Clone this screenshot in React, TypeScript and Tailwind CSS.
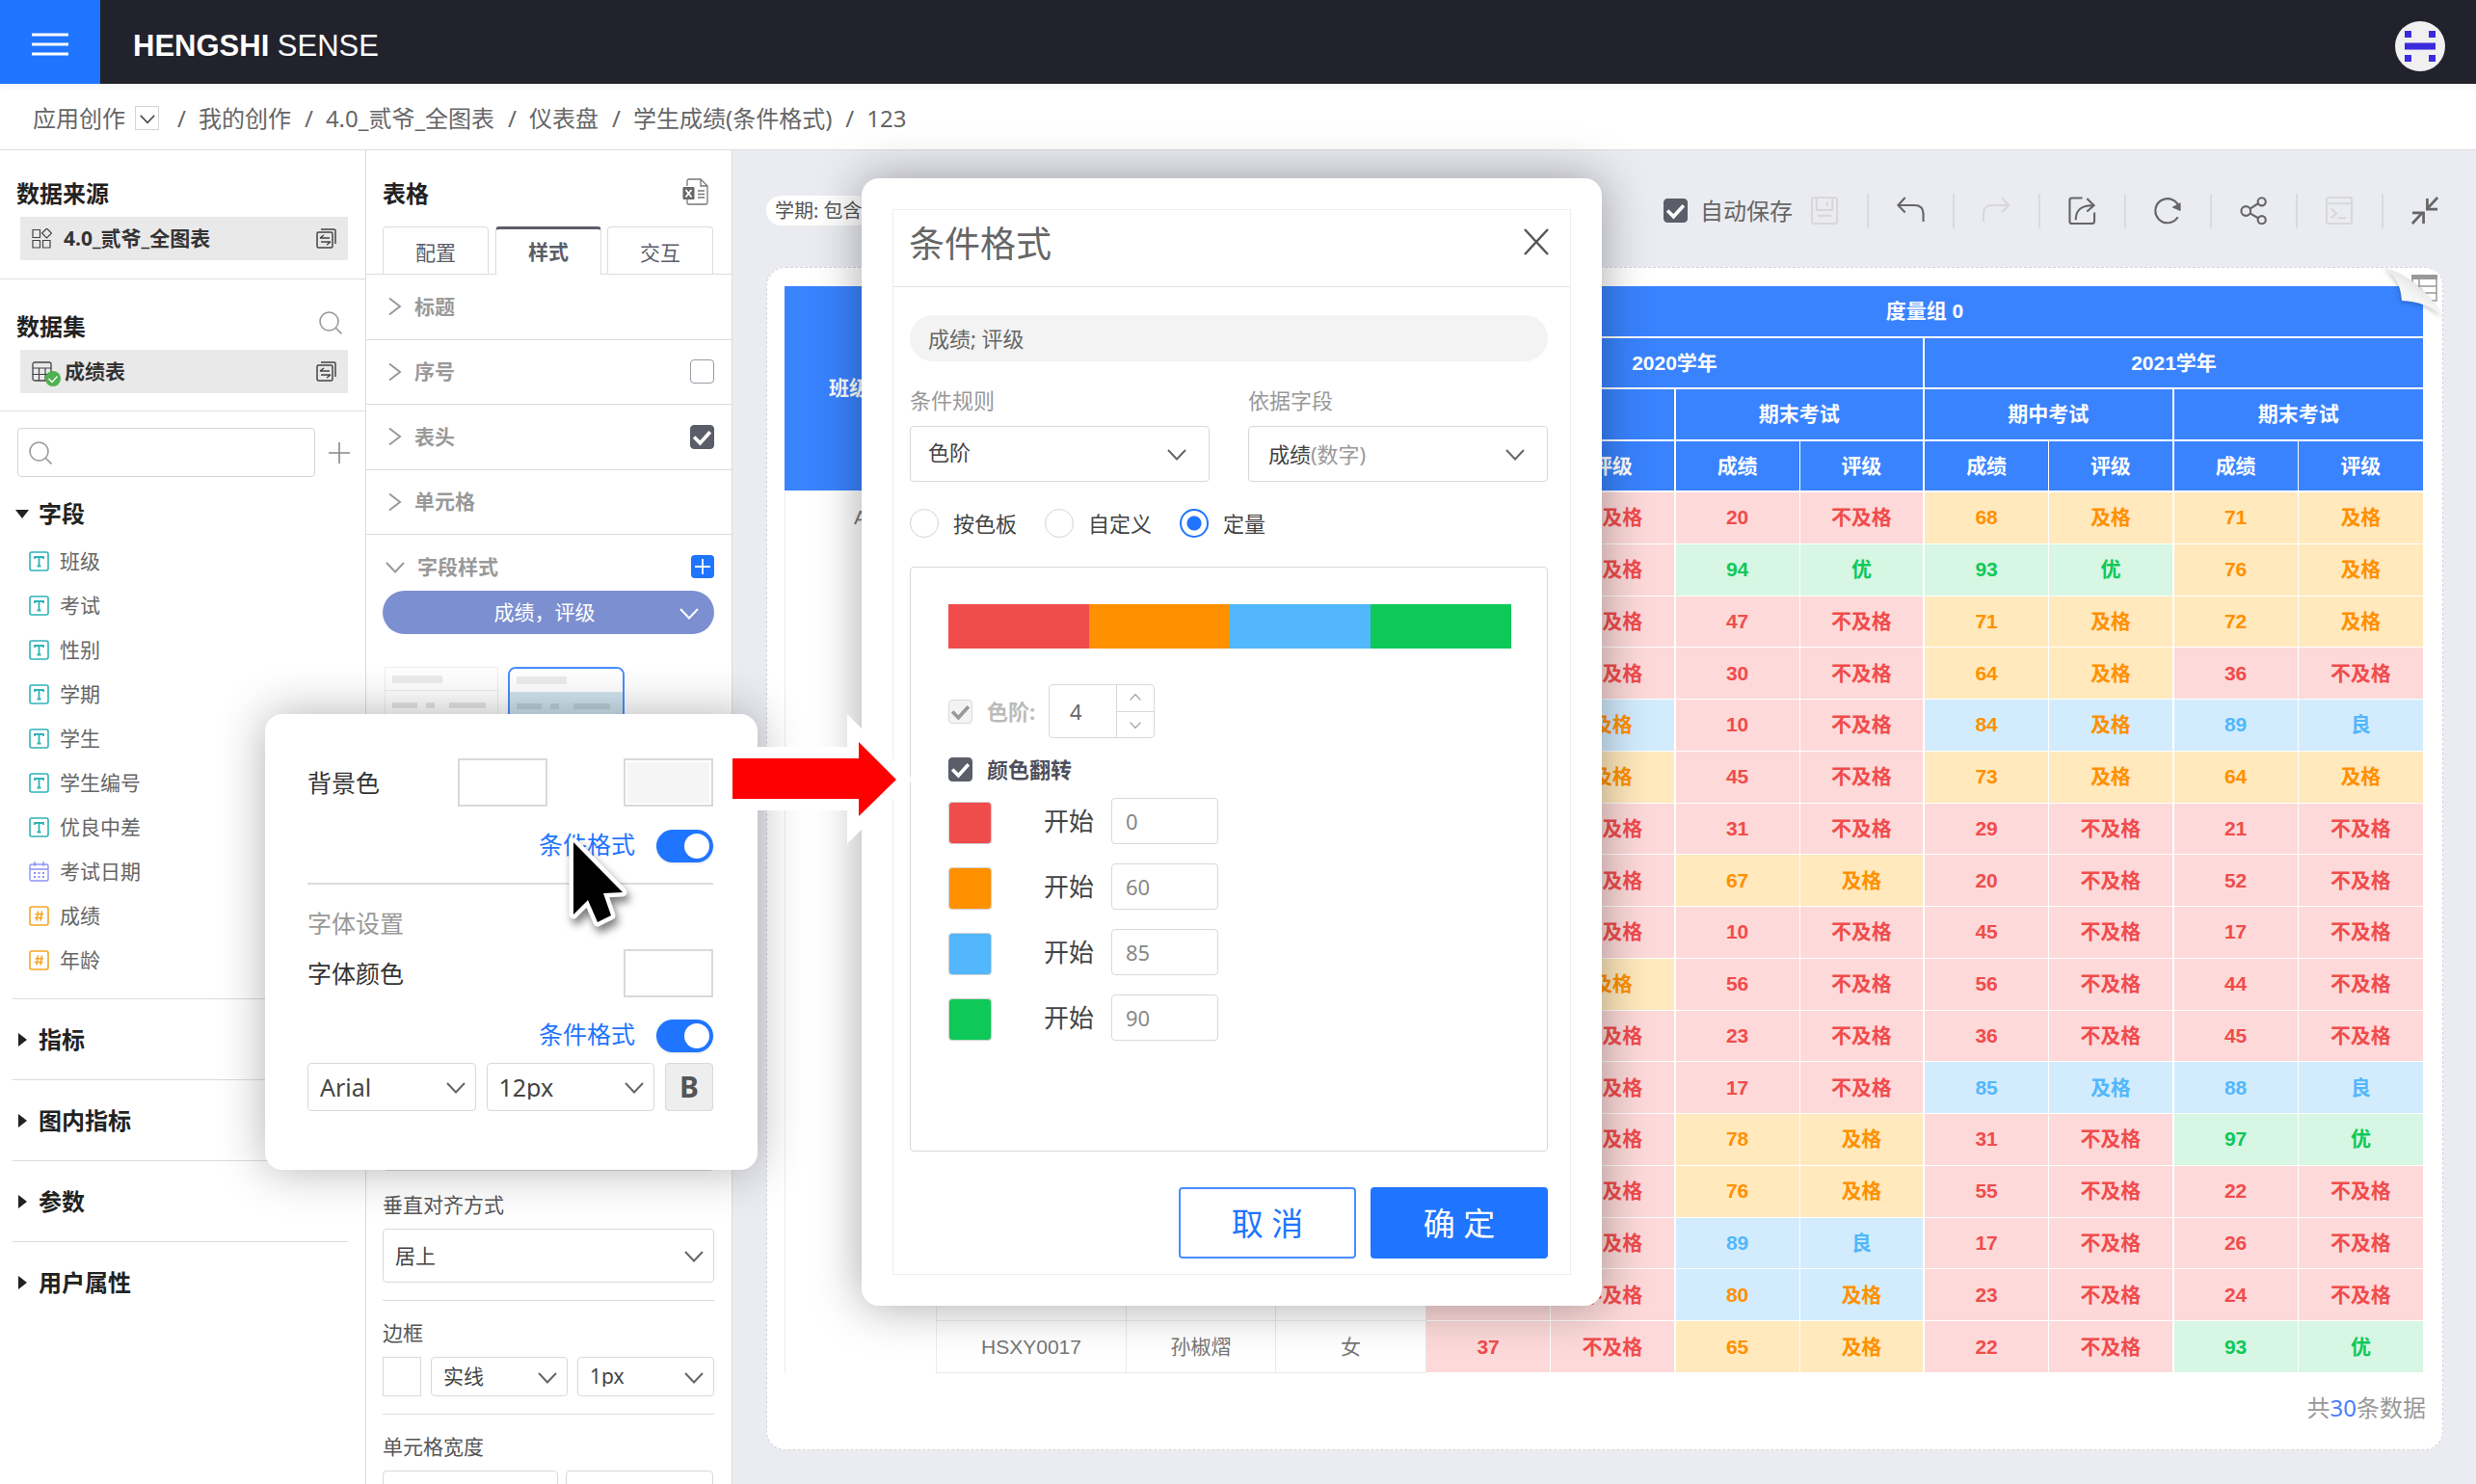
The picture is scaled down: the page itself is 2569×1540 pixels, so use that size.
import React, { useState } from 'react';

type Rule = { color: string; start: string };

const breadcrumbs = ['我的创作', '4.0_贰爷_全图表', '仪表盘', '学生成绩(条件格式)', '123'];

const fields: { name: string; kind: 'text' | 'date' | 'number' }[] = [
  { name: '班级', kind: 'text' },
  { name: '考试', kind: 'text' },
  { name: '性别', kind: 'text' },
  { name: '学期', kind: 'text' },
  { name: '学生', kind: 'text' },
  { name: '学生编号', kind: 'text' },
  { name: '优良中差', kind: 'text' },
  { name: '考试日期', kind: 'date' },
  { name: '成绩', kind: 'number' },
  { name: '年龄', kind: 'number' },
];

const groups = ['指标', '图内指标', '参数', '用户属性'];

const styleSections: { name: string; checked?: boolean }[] = [
  { name: '标题' },
  { name: '序号', checked: false },
  { name: '表头', checked: true },
  { name: '单元格' },
];

// 每行四次考试的成绩：2020 期中、2020 期末、2021 期中、2021 期末
const scores = [
  [35, 20, 68, 71],
  [42, 94, 93, 76],
  [18, 47, 71, 72],
  [51, 30, 64, 36],
  [82, 10, 84, 89],
  [66, 45, 73, 64],
  [27, 31, 29, 21],
  [39, 67, 20, 52],
  [44, 10, 45, 17],
  [70, 56, 56, 44],
  [12, 23, 36, 45],
  [33, 17, 85, 88],
  [25, 78, 31, 97],
  [48, 76, 55, 22],
  [19, 89, 17, 26],
  [53, 80, 23, 24],
  [37, 65, 22, 93],
];

const rules: Rule[] = [
  { color: 'bg-[#f04c4c]', start: '0' },
  { color: 'bg-[#ff9000]', start: '60' },
  { color: 'bg-[#52b7fc]', start: '85' },
  { color: 'bg-[#0ec958]', start: '90' },
];

const cellBg = (score: number) => {
  if (score >= 90) return 'bg-[#d7f6e3]';
  if (score >= 80) return 'bg-[#d2ecfe]';
  if (score >= 60) return 'bg-[#ffe9bd]';
  return 'bg-[#fdd9d9]';
};

const cellText = (score: number) => {
  if (score >= 90) return 'text-[#0ec958]';
  if (score >= 85) return 'text-[#52b7fc]';
  if (score >= 60) return 'text-[#ff9000]';
  return 'text-[#f04c4c]';
};

const grade = (score: number) => {
  if (score >= 90) return '优';
  if (score > 85) return '良';
  if (score >= 60) return '及格';
  return '不及格';
};

const Chevron: React.FC<{ className?: string; dir?: 'down' | 'right' }> = ({ className = '', dir = 'down' }) => (
  <svg viewBox="0 0 20 20" fill="none" stroke="currentColor" strokeWidth={2} className={className} aria-hidden="true">
    <path d={dir === 'down' ? 'M1 6 10 15.500 19 6' : 'M4 1.500 15 10 4 18.500'} />
  </svg>
);

const SearchIcon: React.FC = () => (
  <svg viewBox="0 0 24 24" fill="none" stroke="#999" strokeWidth={1.6} className="h-6 w-6" aria-hidden="true">
    <circle cx="10.5" cy="10.5" r="9.5" />
    <path d="m17.5 17.5 6 6" />
  </svg>
);

const SwapIcon: React.FC = () => (
  <svg viewBox="0 0 21 21" fill="none" stroke="#444" strokeWidth={1.5} className="h-[21px] w-[21px]" aria-hidden="true">
    <rect x="1" y="4" width="16" height="16" rx="1.5" />
    <path d="M5 1h13.5Q20 1 20 2.500V16" />
    <path d="M4 10h10M4 10l4-3M5 14h10M15 14l-4 3" />
  </svg>
);

const FieldIcon: React.FC<{ kind: string }> = ({ kind }) => {
  if (kind === 'date') {
    return (
      <svg viewBox="0 0 21 21" fill="none" stroke="#8f93f5" strokeWidth={1.4} className="h-[21px] w-[21px]" aria-hidden="true">
        <rect x="1" y="3" width="19" height="17" rx="2" />
        <path d="M1 8h19M6 0v5M15 0v5" />
        <path d="M5 12h11M5 16h11" strokeDasharray="2 2.500" strokeWidth={1.8} />
      </svg>
    );
  }
  const color = kind === 'text' ? '#2fb3b5' : '#f5a623';
  return (
    <svg viewBox="0 0 21 21" fill="none" stroke={color} strokeWidth={1.6} className="h-[21px] w-[21px]" aria-hidden="true">
      <rect x="1" y="1" width="19" height="19" rx="2" />
      {kind === 'text' ? (
        <path d="M6 8V6h9v2M10.500 6v9.500M8.500 15.500h4" strokeWidth={1.8} />
      ) : (
        <path d="M9.500 5.500l-1.500 10M13.500 5.500l-1.500 10M6.500 8.700h8.500M6 12.500h8.500" />
      )}
    </svg>
  );
};

const Checkbox: React.FC<{ id: string; label?: string; defaultChecked?: boolean; disabled?: boolean }> = ({
  id,
  label,
  defaultChecked = false,
  disabled = false,
}) => {
  const [checked, setChecked] = useState(defaultChecked);
  return (
    <span className="relative flex h-[25px] w-[25px] shrink-0">
      <input
        id={id}
        type="checkbox"
        aria-label={label}
        checked={checked}
        disabled={disabled}
        onChange={() => setChecked(!checked)}
        className="h-[25px] w-[25px] appearance-none rounded border border-[#999ba5] bg-white checked:border-[#5b5d69] checked:bg-[#5b5d69] disabled:border-[#d9d9d9] disabled:bg-[#f3f3f3]"
      />
      {checked && (
        <svg
          viewBox="0 0 24 24"
          fill="none"
          stroke={disabled ? '#999' : '#fff'}
          strokeWidth={3.5}
          className="pointer-events-none absolute inset-0 h-[25px] w-[25px]"
          aria-hidden="true"
        >
          <path d="m4 12 6 6L20 7" />
        </svg>
      )}
    </span>
  );
};

const Toggle: React.FC<{ label: string }> = ({ label }) => {
  const [on, setOn] = useState(true);
  return (
    <input
      type="checkbox"
      role="switch"
      aria-label={label}
      checked={on}
      onChange={() => setOn(!on)}
      className="relative h-[34px] w-[59px] shrink-0 appearance-none rounded-full bg-[#c4c4c4] shadow-sm before:absolute before:left-1 before:top-1 before:h-[26px] before:w-[26px] before:rounded-full before:bg-white checked:bg-[#1f75ff] checked:before:left-[29px]"
    />
  );
};

const Select: React.FC<{ id: string; label?: string; value: string; hint?: string; className?: string }> = ({
  id,
  label,
  value,
  hint,
  className = '',
}) => (
  <div className={`relative flex items-center ${className}`}>
    <select
      id={id}
      aria-label={label}
      className="h-full w-full appearance-none rounded border border-[#d9d9d9] bg-white pl-3 pr-10 text-[#444]"
    >
      <option>{value}</option>
    </select>
    {hint && <span className="pointer-events-none absolute left-[65px] text-[#999]">{hint}</span>}
    <Chevron className="pointer-events-none absolute right-[11px] h-5 w-5 text-[#666]" />
  </div>
);

const TopBar: React.FC = () => (
  <header className="flex h-[87px] shrink-0 items-center bg-[#21222c]">
    <button aria-label="菜单" className="flex h-full w-[104px] items-center justify-center bg-[#1f75ff]">
      <svg viewBox="0 0 38 26" stroke="#fff" strokeWidth={3} className="mt-1 h-[26px] w-[38px]" aria-hidden="true">
        <path d="M0 3h38M0 13h38M0 23h38" />
      </svg>
    </button>
    <h1 className="ml-[34px] flex-1 pt-2 font-['Liberation_Sans',sans-serif] text-[31px] text-white">
      <b>HENGSHI</b> SENSE
    </h1>
    <svg viewBox="0 0 52 52" className="mr-8 mt-2 h-[52px] w-[52px]" role="img" aria-label="用户">
      <circle cx="26" cy="26" r="26" fill="#f0f0f0" />
      <path d="M10 10h7v7h-7zM35 10h7v7h-7zM10 22.500h32v7H10zM10 35h7v7h-7zM35 35h7v7h-7z" fill="#3a2bdc" />
    </svg>
  </header>
);

const Breadcrumb: React.FC = () => (
  <nav className="flex h-[69px] shrink-0 items-center border-b border-[#dcdcdc] bg-white px-[34px] pt-[3px] text-2xl text-[#666] shadow-[inset_0_8px_8px_-6px_rgba(0,0,0,0.06)]">
    <a href="#apps">应用创作</a>
    <button aria-label="切换" className="ml-[10px] mr-[5px] flex h-[25px] w-[25px] items-center justify-center border border-[#d4d4d4]">
      <Chevron className="h-4 w-4 text-[#444]" />
    </button>
    {breadcrumbs.map((item) => (
      <React.Fragment key={item}>
        <span className="ml-[14px] mr-[13px]">/</span>
        <a href="#path">{item}</a>
      </React.Fragment>
    ))}
  </nav>
);

const DataPanel: React.FC = () => (
  <aside className="w-[380px] shrink-0 overflow-hidden border-r border-[#dcdcdc] bg-white text-[21px] text-[#666]">
    <section className="border-b border-[#dcdcdc] pb-[19px] pl-[17px] pr-[18px] pt-[27px]">
      <h2 className="flex h-9 items-center text-2xl font-bold text-[#222]">数据来源</h2>
      <div className="ml-1 mt-[6px] flex h-[45px] items-center bg-[#e9e9e9] px-3 font-bold text-[#333]">
        <svg viewBox="0 0 21 21" fill="none" stroke="#444" strokeWidth={1.2} className="mr-3 h-[21px] w-[21px]" aria-hidden="true">
          <path d="M1 1.500h7.500v8H1zM1 12.500h7.500V20H1zM11.500 12.500H19V20h-7.500zM15.500 0l5 5-5 5-5-5z" />
        </svg>
        <span className="flex-1">4.0_贰爷_全图表</span>
        <button aria-label="替换数据来源">
          <SwapIcon />
        </button>
      </div>
    </section>

    <section className="border-b border-[#dcdcdc] pb-[18px] pl-[17px] pr-[18px] pt-[31px]">
      <div className="flex h-9 justify-between pr-[6px]">
        <h2 className="flex items-center text-2xl font-bold text-[#222]">数据集</h2>
        <button aria-label="搜索数据集" className="mb-auto mt-[2px]">
          <SearchIcon />
        </button>
      </div>
      <div className="ml-1 mt-[6px] flex h-[45px] items-center bg-[#e9e9e9] px-3 font-bold text-[#333]">
        <svg viewBox="0 0 30 26" fill="none" className="mr-1 mt-1 h-[26px] w-[30px]" aria-hidden="true">
          <rect x="1" y="1" width="19" height="19" rx="2" stroke="#444" strokeWidth={1.3} />
          <path d="M1 7h19M1 13.500h19M7.500 7v13M14 7v13" stroke="#444" strokeWidth={1.2} />
          <circle cx="22" cy="18" r="8" fill="#4fb04f" />
          <path d="m17.500 18 3.500 3.500 5.500-6" stroke="#fff" strokeWidth={1.3} />
        </svg>
        <span className="flex-1">成绩表</span>
        <button aria-label="替换数据集">
          <SwapIcon />
        </button>
      </div>
    </section>

    <div className="flex items-center pl-[18px] pt-[17px]">
      <div className="relative flex items-center">
        <input type="search" aria-label="搜索字段" className="h-[51px] w-[309px] rounded border border-[#d4d4d4] pl-11" />
        <span className="pointer-events-none absolute left-3">
          <SearchIcon />
        </span>
      </div>
      <button aria-label="新建字段" className="ml-[14px]">
        <svg viewBox="0 0 22 22" stroke="#888" strokeWidth={1.6} className="h-[22px] w-[22px]" aria-hidden="true">
          <path d="M0 11h22M11 0v22" />
        </svg>
      </button>
    </div>

    <h3 className="mt-5 flex h-9 items-center pl-4 text-2xl font-bold text-[#222]">
      <svg viewBox="0 0 14 9" fill="#222" className="mr-[10px] h-[9px] w-[14px]" aria-hidden="true">
        <path d="M0 0h14L7 9z" />
      </svg>
      字段
    </h3>
    <ul className="mb-[17px] mt-2">
      {fields.map(({ name, kind }) => (
        <li key={name} className="flex h-[46px] items-center gap-[11px] pl-[30px]">
          <FieldIcon kind={kind} />
          {name}
        </li>
      ))}
    </ul>

    {groups.map((name) => (
      <h3
        key={name}
        className="ml-[13px] mr-[18px] flex h-[84px] items-center border-t border-[#dcdcdc] pl-[6px] text-2xl font-bold text-[#222]"
      >
        <svg viewBox="0 0 9 14" fill="#222" className="mr-3 h-[14px] w-[9px]" aria-hidden="true">
          <path d="M0 0v14l9-7z" />
        </svg>
        {name}
      </h3>
    ))}
  </aside>
);

const StylePanel: React.FC = () => (
  <aside className="w-[380px] shrink-0 overflow-hidden border-r border-[#dcdcdc] bg-white text-[21px] text-[#555]">
    <div className="flex h-[63px] items-end justify-between pl-[17px] pr-6">
      <h2 className="flex h-9 items-center text-2xl font-bold text-[#222]">表格</h2>
      <button aria-label="导出 Excel" className="mb-[6px]">
        <svg viewBox="0 0 27 28" fill="none" stroke="#777" strokeWidth={1.3} className="h-[28px] w-[27px]" aria-hidden="true">
          <path d="M5 8V2.500Q5 1 6.500 1H19l7 7v17.500Q26 27 24.500 27h-18Q5 27 5 25.500V22M19 1v7h7M16 13h7M16 16.500h7M16 20h7" />
          <rect x="0.500" y="9" width="12" height="13" rx="1" fill="#666" stroke="none" />
          <path d="m3.500 12 6 7.500M9.500 12l-6 7.500" stroke="#fff" strokeWidth={1.8} />
        </svg>
      </button>
    </div>

    <div role="tablist" className="mt-4 flex h-[50px] items-stretch border-b border-[#dcdcdc] pl-[17px] text-[#5b5d69]">
      <button role="tab" aria-selected="false" className="w-[110px] rounded-t border border-b-0 border-[#dcdcdc] pt-1">
        配置
      </button>
      <button
        role="tab"
        aria-selected="true"
        className="-mb-px ml-[7px] w-[110px] rounded-t border border-b-0 border-t-[3px] border-[#dcdcdc] border-t-[#5b5d69] bg-white font-bold"
      >
        样式
      </button>
      <button role="tab" aria-selected="false" className="ml-[6px] w-[110px] rounded-t border border-b-0 border-[#dcdcdc] pt-1">
        交互
      </button>
    </div>

    <div className="grid h-[270px] grid-rows-4">
      {styleSections.map(({ name, checked }) => (
        <div key={name} className="flex items-center border-b border-[#dcdcdc] pl-5 pr-[18px] font-bold text-[#999]">
          <Chevron dir="right" className="mr-[10px] h-5 w-5" />
          <span className="flex-1">{name}</span>
          {checked !== undefined && <Checkbox id={`section-${name}`} label={name} defaultChecked={checked} />}
        </div>
      ))}
    </div>

    <div className="flex h-[58px] items-center pl-5 pr-[18px] pt-2 font-bold text-[#999]">
      <Chevron className="mr-[13px] h-5 w-5" />
      <span className="flex-1">字段样式</span>
      <button aria-label="添加字段样式" className="h-6 w-6 rounded-sm bg-[#1f75ff]">
        <svg viewBox="0 0 24 24" stroke="#fff" strokeWidth={1.8} className="h-6 w-6" aria-hidden="true">
          <path d="M4 12h16M12 4v16" />
        </svg>
      </button>
    </div>

    <div className="pl-[17px] pr-[18px]">
      <div className="relative flex h-[45px] items-center">
        <select aria-label="样式字段" className="h-full w-full appearance-none rounded-full bg-[#7c8fd0] pr-2 text-center text-white">
          <option>成绩，评级</option>
        </select>
        <Chevron className="pointer-events-none absolute right-4 h-5 w-5 text-white" />
      </div>

      <div className="mt-[34px] flex gap-[10px]">
        <button aria-label="样式一" className="ml-[2px] flex h-[120px] w-[118px] flex-col border border-[#eee]">
          <span className="flex h-6 w-full items-center border-b border-[#eee] pl-[7px]">
            <span className="h-2 w-[52px] bg-[#ececec]" />
          </span>
          <span className="flex gap-[9px] pl-[7px] pt-3">
            <span className="h-[6px] w-[26px] bg-[#e6e6e6]" />
            <span className="h-[6px] w-[9px] bg-[#e6e6e6]" />
            <span className="ml-[6px] h-[6px] w-[38px] bg-[#e6e6e6]" />
          </span>
        </button>
        <button aria-label="样式二" className="flex h-[120px] w-[121px] flex-col overflow-hidden rounded-lg border-2 border-[#4a8dff] bg-[#cfe4ef]">
          <span className="flex h-6 w-full items-center bg-white pl-[7px]">
            <span className="h-2 w-[52px] bg-[#ececec]" />
          </span>
          <span className="flex gap-[9px] pl-[7px] pt-3">
            <span className="h-[6px] w-[26px] bg-[#bccfd9]" />
            <span className="h-[6px] w-[9px] bg-[#bccfd9]" />
            <span className="ml-[6px] h-[6px] w-[38px] bg-[#bccfd9]" />
          </span>
        </button>
      </div>

      <Select id="halign" label="水平对齐方式" value="" className="mt-[347px] h-14" />
      <label htmlFor="valign" className="mt-5 flex h-[30px] items-center">
        垂直对齐方式
      </label>
      <Select id="valign" value="居上" className="mt-[10px] h-14" />
      <hr className="mt-[18px] border-[#dcdcdc]" />

      <label htmlFor="border-style" className="mt-[18px] flex h-[30px] items-center">
        边框
      </label>
      <div className="mt-[10px] flex h-[41px] gap-[10px]">
        <button aria-label="边框颜色" className="w-10 border border-[#d9d9d9]" />
        <Select id="border-style" value="实线" className="flex-1" />
        <Select id="border-width" label="边框宽度" value="1px" className="flex-1" />
      </div>
      <hr className="mt-[18px] border-[#dcdcdc]" />

      <label htmlFor="cell-width" className="mt-[18px] flex h-[30px] items-center">
        单元格宽度
      </label>
      <div className="mt-[10px] flex h-[41px] gap-2">
        <input id="cell-width" className="w-[182px] rounded border border-[#d9d9d9]" />
        <input aria-label="宽度单位" className="w-[153px] rounded border border-[#d9d9d9]" />
      </div>
    </div>
  </aside>
);

const tools: { name: string; draw: React.ReactNode; muted?: boolean }[] = [
  {
    name: '保存',
    muted: true,
    draw: <path d="M3.500 1h22Q28 1 28 3.500v22.500Q28 29 25.500 29h-22Q1 29 1 26.500v-23Q1 1 3.500 1zM6 1v13.500h17V1M17.500 5.500v5M7 20.500h15" />,
  },
  { name: '撤销', draw: <path d="M9 1 1.500 9.300 9 17M1.500 9.300H19q9.500 0 9.500 9V27" /> },
  { name: '重做', muted: true, draw: <path d="m20.500 1 7.500 8.300L20.500 17M28 9.300H10.500Q1 9.300 1 18.300V27" /> },
  {
    name: '导出',
    draw: (
      <path d="M15 1.500H4Q1.500 1.500 1.500 4v22Q1.500 29 4 29h21.500Q28 29 28 26.500V17M8 25C8 14 14 9.500 27 9.500M20 2l7.500 7.500L20 16" />
    ),
  },
  {
    name: '刷新',
    draw: (
      <>
        <path d="M25.500 22A13 13 0 1 1 27 12" />
        <path d="M20 11.500 28 7v8z" fill="currentColor" strokeWidth={1} />
      </>
    ),
  },
  {
    name: '分享',
    draw: (
      <>
        <circle cx="6.500" cy="15.500" r="5" />
        <circle cx="23.500" cy="5.500" r="4.200" />
        <circle cx="23.500" cy="25" r="4.200" />
        <path d="m11 13 8.500-5.500M11 18l8.500 5" />
      </>
    ),
  },
  {
    name: '控制台',
    muted: true,
    draw: <path d="M3 1h23.500Q28 1 28 2.500v25Q28 29 26.500 29H3q-2 0-2-2V3Q1 1 3 1zM1 7.500h27M6 13l5.500 5L6 23M13 23h9" />,
  },
  { name: '收起', draw: <path d="M28 1 17 13M17 2v11.500h11M1 29l11-12M1 17.500h12V29" strokeWidth={2.8} /> },
];

const Toolbar: React.FC = () => (
  <div className="flex h-[121px] items-center justify-between pl-[35px] pr-[38px] pt-1">
    <span className="flex h-[31px] items-center rounded-full bg-white px-[9px] text-xl text-[#555]">学期: 包含</span>
    <div className="flex items-center">
      <Checkbox id="autosave" defaultChecked />
      <label htmlFor="autosave" className="ml-[13px] mr-[19px] text-2xl text-[#666]">
        自动保存
      </label>
      <div className="flex items-center gap-[29px]">
        {tools.map(({ name, draw, muted }, i) => (
          <React.Fragment key={name}>
            {i > 0 && <span className="h-9 w-[2px] bg-[#dadbe0]" />}
            <button aria-label={name} className={muted ? 'text-[#d8d8da]' : 'text-[#666]'}>
              <svg viewBox="0 0 30 30" fill="none" stroke="currentColor" strokeWidth={2.2} className="h-[29px] w-[29px]" aria-hidden="true">
                {draw}
              </svg>
            </button>
          </React.Fragment>
        ))}
      </div>
    </div>
  </div>
);

const head = 'border-b-2 border-r-2 border-white';

const ScoreTable: React.FC = () => (
  <table className="h-[1128px] w-full table-fixed border-separate border-spacing-0 text-center font-['Liberation_Sans','Noto_Sans_CJK_SC',sans-serif] text-[21px] leading-6 text-[#777]">
    <colgroup>
      <col className="w-[158px]" />
      <col className="w-[197px]" />
      <col className="w-[155px]" />
      <col className="w-[156px]" />
      <col span={8} />
    </colgroup>
    <thead className="bg-[#3983ff] text-white">
      <tr className="h-[54px]">
        <th rowSpan={4} className={`${head} pr-[22px]`}>
          班级
        </th>
        <th rowSpan={4} className={head}>学生编号</th>
        <th rowSpan={4} className={head}>学生</th>
        <th rowSpan={4} className={head}>性别</th>
        <th colSpan={8} className="border-b-2 border-white">度量组 0</th>
      </tr>
      <tr className="h-[53px]">
        <th colSpan={4} className={head}>2020学年</th>
        <th colSpan={4} className="border-b-2 border-white">2021学年</th>
      </tr>
      <tr className="h-[54px]">
        <th colSpan={2} className={head}>期中考试</th>
        <th colSpan={2} className={head}>期末考试</th>
        <th colSpan={2} className={head}>期中考试</th>
        <th colSpan={2} className="border-b-2 border-white">期末考试</th>
      </tr>
      <tr className="h-[53px]">
        {[0, 1, 2, 3].map((n) => (
          <React.Fragment key={n}>
            <th className="border-b-2 border-r border-white">成绩</th>
            <th className={n < 3 ? head : 'border-b-2 border-white'}>评级</th>
          </React.Fragment>
        ))}
      </tr>
    </thead>
    <tbody>
      {scores.map((row, i) => (
        <tr key={i}>
          {i === 0 && (
            <td rowSpan={17} className="border-l border-r border-[#ececec] pt-[14px] align-top">
              A
            </td>
          )}
          <td className="border-b border-r border-[#e9e9e9]">{i === 16 && 'HSXY0017'}</td>
          <td className="border-b border-r border-[#e9e9e9]">{i === 16 && '孙椒熠'}</td>
          <td className="border-b border-r border-[#e9e9e9]">{i === 16 && '女'}</td>
          {row.map((score, n) => (
            <React.Fragment key={n}>
              <td className={`border-b border-r border-white font-bold ${cellBg(score)} ${cellText(score)}`}>{score}</td>
              <td
                className={`border-b border-white font-bold ${n < 3 ? 'border-r-2' : ''} ${cellBg(score)} ${cellText(score)}`}
              >
                {grade(score)}
              </td>
            </React.Fragment>
          ))}
        </tr>
      ))}
    </tbody>
  </table>
);

const PageCurl: React.FC = () => (
  <svg viewBox="0 0 66 56" className="absolute -right-px -top-px h-14 w-[66px]" aria-hidden="true">
    <defs>
      <linearGradient id="curl" x1="0.200" y1="0.900" x2="0.700" y2="0.300">
        <stop offset="0" stopColor="#fff" />
        <stop offset="0.600" stopColor="#f4f4f4" />
        <stop offset="1" stopColor="#dedede" />
      </linearGradient>
    </defs>
    <path d="M4 1h42q18 0 19 18v31C55 30 30 6 4 1z" fill="#fff" />
    <path d="M34 9h25v26H34zM41 9v26M34 20h25M34 27h25" fill="none" stroke="#999" strokeWidth={1.5} />
    <path d="M33 8h27v5H33z" fill="#999" />
    <path
      d="M4 1c12 7 18 18 19 34 18 1 31 6 42 16C56 32 32 7 4 1z"
      fill="url(#curl)"
      className="drop-shadow-[-1px_2px_2px_rgba(0,0,0,0.2)]"
    />
  </svg>
);

const FormatPopover: React.FC = () => (
  <div className="absolute left-[275px] top-[741px] h-[473px] w-[511px] rounded-[18px] bg-white pl-[44px] pr-[46px] pt-[46px] text-[25px] text-[#333] shadow-[0_0_50px_rgba(0,0,0,0.3)]">
    <div className="flex h-[50px] items-center">
      <span>背景色</span>
      <button aria-label="背景色一" className="ml-auto h-[50px] w-[93px] border-2 border-[#d9d9d9]" />
      <button aria-label="背景色二" className="ml-[79px] h-[50px] w-[93px] border-2 border-[#d9d9d9] bg-[#f5f5f5] shadow-[inset_0_0_0_2px_#fff]" />
    </div>
    <div className="mt-[22px] flex h-[38px] items-center justify-end gap-[22px]">
      <a href="#bg-format" className="pb-1 text-[#1f75ff]">条件格式</a>
      <Toggle label="背景色条件格式" />
    </div>
    <hr className="mt-[19px] border-t-2 border-[#dcdcdc]" />
    <div className="mt-[22px] flex h-9 items-center text-[#999]">字体设置</div>
    <div className="mt-[9px] flex h-[50px] items-center justify-between">
      <span>字体颜色</span>
      <button aria-label="字体颜色" className="h-[50px] w-[93px] border-2 border-[#d9d9d9]" />
    </div>
    <div className="mt-[21px] flex h-[38px] items-center justify-end gap-[22px]">
      <a href="#font-format" className="pb-1 text-[#1f75ff]">条件格式</a>
      <Toggle label="字体颜色条件格式" />
    </div>
    <div className="mt-[9px] flex h-[50px] gap-[11px]">
      <Select id="font-family" label="字体" value="Arial" className="flex-1" />
      <Select id="font-size" label="字号" value="12px" className="flex-1" />
      <button aria-label="加粗" className="w-[50px] rounded border border-[#d9d9d9] bg-[#eee] text-[30px] font-bold text-[#555]">
        B
      </button>
    </div>
  </div>
);

const FormatDialog: React.FC = () => {
  const [mode, setMode] = useState('定量');
  return (
    <div
      role="dialog"
      aria-labelledby="dialog-title"
      className="absolute left-[894px] top-[185px] h-[1170px] w-[768px] rounded-[18px] bg-white p-8 text-[22px] text-[#444] shadow-[0_0_50px_rgba(0,0,0,0.35)]"
    >
      <div className="h-full border border-[#eee]">
        <div className="flex h-20 items-center justify-between border-b border-[#e4e4e4] pb-[10px] pl-4 pr-[22px]">
          <h2 id="dialog-title" className="text-[37px] leading-none text-[#666]">
            条件格式
          </h2>
          <button aria-label="关闭" className="pb-1">
            <svg viewBox="0 0 26 28" stroke="#555" strokeWidth={2.4} className="h-[28px] w-[26px]" aria-hidden="true">
              <path d="m1 1 24 26M25 1 1 27" />
            </svg>
          </button>
        </div>

        <div className="pl-[17px] pr-[23px]">
          <div className="mt-[29px] flex h-12 items-center rounded-full bg-[#f3f3f3] pl-[19px] text-[#666]">成绩; 评级</div>

          <div className="mt-[23px] grid grid-cols-2 gap-x-10">
            <label htmlFor="rule" className="flex h-[34px] items-center text-[#999]">
              条件规则
            </label>
            <label htmlFor="basis" className="flex h-[34px] items-center text-[#999]">
              依据字段
            </label>
            <Select id="rule" value="色阶" className="mt-[10px] h-[58px] [&>select]:pb-1 [&>select]:pl-[18px] [&>svg]:right-6" />
            <Select id="basis" value="成绩" hint="(数字)" className="mt-[10px] h-[58px] [&>select]:pl-5 [&>svg]:right-6" />
          </div>

          <div className="mt-[28px] flex h-[30px] items-center gap-[29px]">
            {['按色板', '自定义', '定量'].map((name) => (
              <label key={name} className="flex items-center gap-[15px]">
                <input
                  type="radio"
                  name="mode"
                  checked={mode === name}
                  onChange={() => setMode(name)}
                  className="h-[30px] w-[30px] appearance-none rounded-full border border-[#d4d4d4] checked:border-2 checked:border-[#1f75ff] checked:bg-[radial-gradient(circle,#1f75ff_7px,#fff_8px)]"
                />
                {name}
              </label>
            ))}
          </div>

          <div className="mt-[30px] h-[607px] rounded border border-[#d9d9d9] pl-[39px] pr-[37px] pt-[38px]">
            <div className="flex h-[46px]">
              {rules.map(({ color }) => (
                <span key={color} className={`flex-1 ${color}`} />
              ))}
            </div>

            <div className="mt-[37px] flex h-14 items-center">
              <Checkbox id="use-scale" defaultChecked disabled />
              <label htmlFor="use-scale" className="ml-[15px] w-[64px] font-bold text-[#bbb]">
                色阶:
              </label>
              <div className="flex h-full w-[110px] rounded border border-[#d9d9d9]">
                <input aria-label="色阶数量" defaultValue="4" className="w-[69px] px-[21px] text-[#666]" />
                <div className="flex flex-1 flex-col border-l border-[#d9d9d9] text-[#999]">
                  <button aria-label="增加" className="flex flex-1 items-center justify-center border-b border-[#d9d9d9]">
                    <Chevron className="h-3 w-3 rotate-180" />
                  </button>
                  <button aria-label="减少" className="flex flex-1 items-center justify-center">
                    <Chevron className="h-3 w-3" />
                  </button>
                </div>
              </div>
            </div>

            <div className="mt-4 flex h-8 items-center">
              <Checkbox id="reverse" defaultChecked />
              <label htmlFor="reverse" className="ml-[15px] font-bold text-[#4d4f5c]">
                颜色翻转
              </label>
            </div>

            <div className="mt-[14px] flex flex-col gap-5">
              {rules.map(({ color, start }) => (
                <div key={start} className="flex h-12 items-end">
                  <button aria-label={`颜色 ${start}`} className={`h-11 w-[45px] rounded border border-[#d0d0d0] ${color}`} />
                  <label htmlFor={`start-${start}`} className="ml-[54px] mr-[18px] self-center text-[26px]">
                    开始
                  </label>
                  <input
                    id={`start-${start}`}
                    defaultValue={start}
                    className="h-12 w-[111px] rounded border border-[#d9d9d9] pl-[14px] text-[#888]"
                  />
                </div>
              ))}
            </div>
          </div>

          <div className="mt-[37px] flex justify-end gap-[15px] text-[33px]">
            <button className="h-[74px] w-[184px] rounded border-2 border-[#4a8dff] text-[#1f75ff]">取 消</button>
            <button className="h-[74px] w-[184px] rounded bg-[#1f75ff] text-white">确 定</button>
          </div>
        </div>
      </div>
    </div>
  );
};

const App: React.FC = () => (
  <div className="relative flex h-screen flex-col overflow-hidden bg-[#ebecf2] font-['Noto_Sans','Noto_Sans_CJK_SC',sans-serif] leading-none">
    <TopBar />
    <Breadcrumb />
    <div className="flex min-h-0 flex-1">
      <DataPanel />
      <StylePanel />
      <main className="min-w-0 flex-1">
        <Toolbar />
        <section className="relative ml-[35px] mr-[34px] rounded-[20px] border border-dashed border-[#d4d4d8] bg-white pb-[7px] pl-[18px] pr-5 pt-[19px]">
          <ScoreTable />
          <p className="-mr-[3px] flex h-[72px] items-center justify-end text-2xl text-[#999]">
            共<span className="text-[#4a7dff]">30</span>条数据
          </p>
          <PageCurl />
        </section>
      </main>
    </div>

    <FormatPopover />
    <FormatDialog />

    {/* 从浮层指向对话框的箭头 */}
    <svg viewBox="0 0 190 150" className="absolute left-[760px] top-[734px] h-[150px] w-[190px]" aria-hidden="true">
      <path
        d="M0 53h131V36l39 39-39 38V95H0z"
        fill="#f00"
        stroke="#fff"
        strokeWidth={24}
        strokeLinejoin="miter"
        paintOrder="stroke"
      />
    </svg>

    <svg
      viewBox="0 0 80 110"
      className="absolute left-[585px] top-[864px] h-[110px] w-20 drop-shadow-[3px_6px_4px_rgba(0,0,0,0.5)]"
      aria-hidden="true"
    >
      <path
        d="M10 10v75l15-15 10 23 14-7-8-23 20-1z"
        fill="#000"
        stroke="#fff"
        strokeWidth={9}
        strokeLinejoin="round"
        paintOrder="stroke"
      />
    </svg>
  </div>
);

export default App;
